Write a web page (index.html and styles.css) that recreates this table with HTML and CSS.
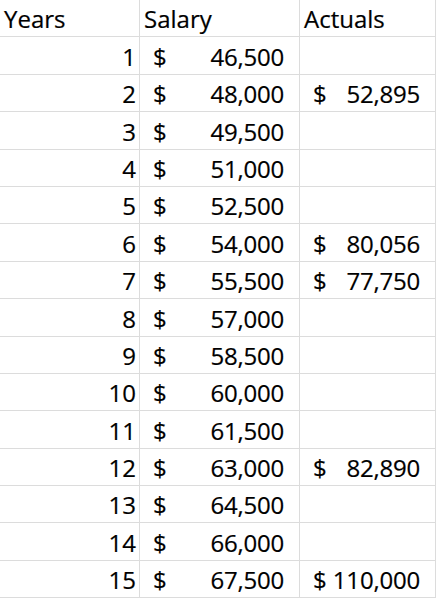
FILE: index.html
```html
<!DOCTYPE html>
<html>
<head>
<meta charset="utf-8">
<link rel="stylesheet" href="styles.css">
</head>
<body>
<div class="sheet">
  <div class="cell text">Years</div><div class="cell text">Salary</div><div class="cell text">Actuals</div>
  <div class="cell num">1</div><div class="cell acct"><span>$</span><span>46,500</span></div><div class="cell"></div>
  <div class="cell num">2</div><div class="cell acct"><span>$</span><span>48,000</span></div><div class="cell acct"><span>$</span><span>52,895</span></div>
  <div class="cell num">3</div><div class="cell acct"><span>$</span><span>49,500</span></div><div class="cell"></div>
  <div class="cell num">4</div><div class="cell acct"><span>$</span><span>51,000</span></div><div class="cell"></div>
  <div class="cell num">5</div><div class="cell acct"><span>$</span><span>52,500</span></div><div class="cell"></div>
  <div class="cell num">6</div><div class="cell acct"><span>$</span><span>54,000</span></div><div class="cell acct"><span>$</span><span>80,056</span></div>
  <div class="cell num">7</div><div class="cell acct"><span>$</span><span>55,500</span></div><div class="cell acct"><span>$</span><span>77,750</span></div>
  <div class="cell num">8</div><div class="cell acct"><span>$</span><span>57,000</span></div><div class="cell"></div>
  <div class="cell num">9</div><div class="cell acct"><span>$</span><span>58,500</span></div><div class="cell"></div>
  <div class="cell num">10</div><div class="cell acct"><span>$</span><span>60,000</span></div><div class="cell"></div>
  <div class="cell num">11</div><div class="cell acct"><span>$</span><span>61,500</span></div><div class="cell"></div>
  <div class="cell num">12</div><div class="cell acct"><span>$</span><span>63,000</span></div><div class="cell acct"><span>$</span><span>82,890</span></div>
  <div class="cell num">13</div><div class="cell acct"><span>$</span><span>64,500</span></div><div class="cell"></div>
  <div class="cell num">14</div><div class="cell acct"><span>$</span><span>66,000</span></div><div class="cell"></div>
  <div class="cell num">15</div><div class="cell acct"><span>$</span><span>67,500</span></div><div class="cell acct"><span>$</span><span>110,000</span></div>
</div>
</body>
</html>
```
FILE: styles.css
```css
html, body {
  margin: 0;
  padding: 0;
  background: #ffffff;
}
.sheet {
  display: grid;
  grid-template-columns: 140px 160px 136px;
  grid-template-rows: repeat(16, 37.4px);
  font-family: "Open Sans", "Noto Sans", sans-serif;
  font-size: 24px;
  color: #000;
  -webkit-text-stroke: 0.2px #000;
}
.cell {
  box-sizing: border-box;
  border-right: 1px solid #dcdcdc;
  border-bottom: 1px solid #dcdcdc;
  display: flex;
  align-items: flex-end;
  line-height: 24px;
  padding-bottom: 5px;
  white-space: nowrap;
}
.text {
  padding-left: 4px;
}
.num {
  justify-content: flex-end;
  padding-right: 3px;
}
.acct {
  justify-content: space-between;
  padding-left: 13px;
  padding-right: 15px;
}
.acct span:last-child {
  letter-spacing: -0.2px;
}
```
